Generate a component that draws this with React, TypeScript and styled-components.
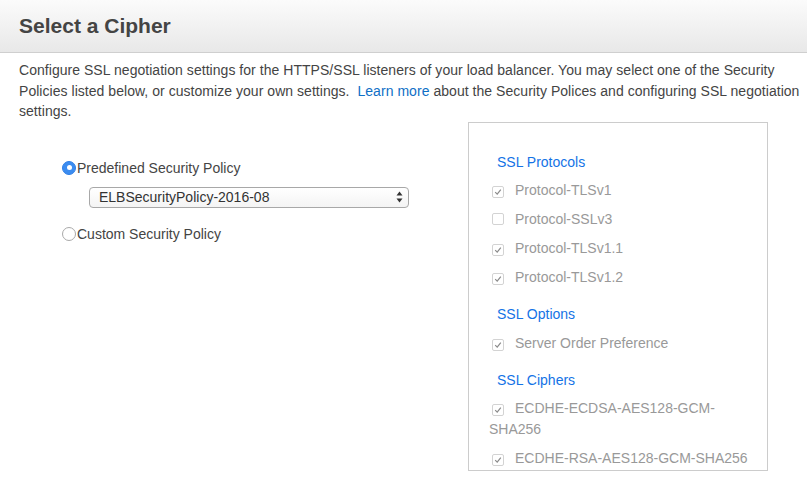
import React from "react";
import styled, { createGlobalStyle } from "styled-components";

const Global = createGlobalStyle`
  html, body { margin: 0; padding: 0; background: #fff; }
  body { font-family: "Liberation Sans", Arial, Helvetica, sans-serif; color: #444; }
  * { box-sizing: border-box; }
`;

const Page = styled.div`
  width: 807px;
  height: 477px;
  overflow: hidden;
  background: #fff;
`;

const Header = styled.div`
  height: 53px;
  display: flex;
  align-items: center;
  padding: 0 19px;
  background: linear-gradient(#fbfbfb, #e8e8e8);
  border-bottom: 1px solid #cfcfcf;
`;

const Title = styled.h1`
  margin: 0;
  font-size: 21px;
  font-weight: bold;
  color: #444;
  padding-bottom: 1px;
`;

const Intro = styled.p`
  margin: 7px 0 0;
  padding: 0 0 0 19px;
  font-size: 14px;
  letter-spacing: 0.04px;
  line-height: 20.5px;
  color: #444;
`;

const Link = styled.a`
  color: #0f6fc6;
  text-decoration: none;
  padding-left: 4px;
`;

const Body = styled.div`
  display: flex;
  padding-left: 19px;
`;

const LeftCol = styled.div`
  width: 449px;
  padding: 36px 0 0 43px;
  display: flex;
  flex-direction: column;
`;

const RadioRow = styled.label`
  display: flex;
  align-items: center;
  height: 20px;
  font-size: 14px;
  color: #444;
`;

const RadioDot = styled.span<{ $on?: boolean }>`
  width: 14px;
  height: 14px;
  border-radius: 50%;
  margin-right: 1px;
  flex: none;
  display: flex;
  align-items: center;
  justify-content: center;
  background: ${(p) => (p.$on ? "#3b8cf0" : "#fff")};
  border: 1px solid ${(p) => (p.$on ? "#2f7fe6" : "#a9a9a9")};
  &::after {
    content: "";
    width: 5px;
    height: 5px;
    border-radius: 50%;
    background: #fff;
    display: ${(p) => (p.$on ? "block" : "none")};
  }
`;

const SelectBox = styled.div`
  margin: 9px 0 0 27px;
  width: 320px;
  height: 21px;
  border: 1px solid #a8a8a8;
  border-radius: 4px;
  background: linear-gradient(#ffffff, #f4f4f4);
  display: flex;
  align-items: center;
  justify-content: space-between;
  padding: 0 5px 0 9px;
  font-size: 14px;
  color: #333;
`;

const Arrows = styled.svg`
  width: 7px;
  height: 12px;
`;

const SecondRadio = styled(RadioRow)`
  margin-top: 16px;
`;

const Panel = styled.div`
  width: 300px;
  height: 349px;
  border: 1px solid #cccccc;
  padding: 21px 14px 0 20px;
  display: flex;
  flex-direction: column;
`;

const Section = styled.div`
  display: flex;
  flex-direction: column;
  padding-top: 8px;
`;

const Heading = styled.div`
  margin: 0 0 7.5px 8px;
  font-size: 14px;
  line-height: 21px;
  color: #1473e6;
`;

const Item = styled.div`
  font-size: 14px;
  line-height: 21px;
  color: #999;
  margin-bottom: 8px;
`;

const Check = styled.span`
  display: inline-flex;
  align-items: center;
  justify-content: center;
  width: 12px;
  height: 12px;
  border: 1px solid #d3d3d3;
  border-radius: 2px;
  background: #fff;
  margin: 0 11px 0 3px;
  vertical-align: -1px;
`;

const CheckBox = ({ on }: { on: boolean }) => (
  <Check>
    {on && (
      <svg width="8" height="8" viewBox="0 0 8 8">
        <path d="M1.2 4.2 L3.2 6.2 L6.8 1.6" fill="none" stroke="#8a8a8a" strokeWidth="1.2" />
      </svg>
    )}
  </Check>
);

const sections: { title: string; items: [string, boolean][] }[] = [
  {
    title: "SSL Protocols",
    items: [
      ["Protocol-TLSv1", true],
      ["Protocol-SSLv3", false],
      ["Protocol-TLSv1.1", true],
      ["Protocol-TLSv1.2", true],
    ],
  },
  { title: "SSL Options", items: [["Server Order Preference", true]] },
  {
    title: "SSL Ciphers",
    items: [
      ["ECDHE-ECDSA-AES128-GCM-SHA256", true],
      ["ECDHE-RSA-AES128-GCM-SHA256", true],
    ],
  },
];

export default function App() {
  return (
    <Page>
      <Global />
      <Header>
        <Title>Select a Cipher</Title>
      </Header>
      <Intro>
        {"Configure SSL negotiation settings for the HTTPS/SSL listeners of your load balancer. You may select one of the Security Policies listed below, or customize your own settings. "}
        <Link>Learn more</Link>
        {" about the Security Polices and configuring SSL negotiation settings."}
      </Intro>
      <Body>
        <LeftCol>
          <RadioRow>
            <RadioDot $on />
            Predefined Security Policy
          </RadioRow>
          <SelectBox>
            <span>ELBSecurityPolicy-2016-08</span>
            <Arrows viewBox="0 0 7 12">
              <path d="M3.5 0.5 L6.5 4.5 L0.5 4.5 Z" fill="#333" />
              <path d="M3.5 11.5 L6.5 7.5 L0.5 7.5 Z" fill="#333" />
            </Arrows>
          </SelectBox>
          <SecondRadio>
            <RadioDot />
            Custom Security Policy
          </SecondRadio>
        </LeftCol>
        <Panel>
          {sections.map((s) => (
            <Section key={s.title}>
              <Heading>{s.title}</Heading>
              {s.items.map(([label, on]) => (
                <Item key={label}>
                  <CheckBox on={on} />
                  {label}
                </Item>
              ))}
            </Section>
          ))}
        </Panel>
      </Body>
    </Page>
  );
}
